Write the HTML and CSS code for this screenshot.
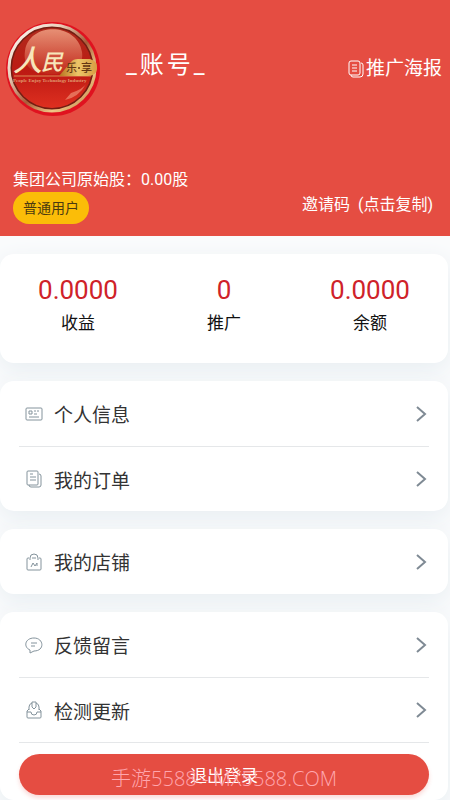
FILE: index.html
```html
<!DOCTYPE html>
<html lang="zh-CN">
<head>
<meta charset="utf-8">
<meta name="viewport" content="width=device-width, initial-scale=1">
<title>个人中心</title>
<link rel="stylesheet" href="styles.css">
</head>
<body>
<header class="hero">
  <div class="profile">
    <svg class="logo" viewBox="0 0 96 98" role="img" aria-label="人民乐享">
      <defs>
        <linearGradient id="rim" x1="0" y1="0" x2="1" y2="1">
          <stop offset="0" stop-color="#fff"/><stop offset=".3" stop-color="#ead0bb"/><stop offset=".55" stop-color="#a85c38"/><stop offset=".75" stop-color="#f0c787"/><stop offset="1" stop-color="#b8763a"/>
        </linearGradient>
        <linearGradient id="ball" x1="0" y1="0" x2="0" y2="1">
          <stop offset="0" stop-color="#b02a1c"/><stop offset=".55" stop-color="#bd1a13"/><stop offset="1" stop-color="#de2f20"/>
        </linearGradient>
        <linearGradient id="shine" x1="0" y1="0" x2="0" y2="1">
          <stop offset="0" stop-color="#f0a184"/><stop offset="1" stop-color="#c22a1b"/>
        </linearGradient>
        <linearGradient id="gold" x1="0" y1="0" x2="1" y2="0">
          <stop offset="0" stop-color="#b8721e"/><stop offset=".5" stop-color="#ecc568"/><stop offset="1" stop-color="#d79b42"/>
        </linearGradient>
      </defs>
      <circle cx="48" cy="49" r="47" fill="#e0121f"/>
      <circle cx="47" cy="48" r="44" fill="#741d12"/>
      <circle cx="47" cy="48" r="43" fill="none" stroke="url(#rim)" stroke-width="3"/>
      <circle cx="47" cy="48" r="40" fill="url(#ball)"/>
      <path d="M20 31C24 2 72 2 77 32C79 45 70 54 47 54C25 54 18 45 20 31Z" fill="url(#shine)" opacity=".85"/>
      <path d="M60 80Q74 77 81 64Q78 69 66 73Z" fill="#f39c80" opacity=".6"/>
      <path d="M9 56H86" stroke="#dc8a55"/>
      <path d="M54 56L66 42Q68 39 73 39H85Q93 41 92 49Q91 56 83 56Z" fill="url(#gold)"/>
      <text class="logo-main" x="8" y="51">人</text>
      <text class="logo-main logo-second" x="36" y="50">民</text>
      <text class="logo-sub" x="61" y="52">乐</text>
      <circle cx="74" cy="48" r="1" fill="#653713"/>
      <text class="logo-sub" x="76" y="52">享</text>
      <text class="logo-en" x="8" y="62">People Enjoy Technology Industry</text>
    </svg>
    <h1 class="account">_账号_</h1>
    <a class="poster" href="#poster">
      <svg class="poster-icon" viewBox="0 0 16 18" aria-hidden="true"><path d="M3 1H10Q12 1 12 3V13Q12 15 10 15H3Q1 15 1 13V3Q1 1 3 1ZM4 5H9M4 8H9M4 11H9M13 3Q15 3 15 5V14Q15 17 12 17H5Q3 17 3 15"/></svg>推广海报</a>
  </div>
  <div class="facts">
    <div>
      <p class="shares">集团公司原始股：0.00股</p>
      <span class="badge">普通用户</span>
    </div>
    <button class="invite" type="button">邀请码&nbsp; (点击复制)</button>
  </div>
</header>
<main class="content">
  <section class="card stats">
    <div><strong class="value">0.0000</strong><span class="label">收益</span></div>
    <div><strong class="value">0</strong><span class="label">推广</span></div>
    <div><strong class="value">0.0000</strong><span class="label">余额</span></div>
  </section>
  <nav class="card menu">
    <a class="row" href="#info"><svg class="icon" viewBox="0 0 18 18" aria-hidden="true"><path d="M2 3H16Q17 3 17 4V14Q17 15 16 15H2Q1 15 1 14V4Q1 3 2 3ZM4 6H7V9H4ZM9 6H11M12 6H14M9 9H12M4 12H14"/></svg><span>个人信息</span><svg class="arrow" viewBox="0 0 12 18" aria-hidden="true"><path d="M2 2L10 9L2 16"/></svg></a>
    <a class="row" href="#orders"><svg class="icon" viewBox="0 0 18 18" aria-hidden="true"><path d="M3 1H12Q13 1 13 2V14Q13 15 12 15H3Q2 15 2 14V2Q2 1 3 1ZM5 4H8M5 7H11M5 10H11M14 4Q16 4 16 6V15Q16 17 14 17H6Q4 17 4 15"/></svg><span>我的订单</span><svg class="arrow" viewBox="0 0 12 18" aria-hidden="true"><path d="M2 2L10 9L2 16"/></svg></a>
  </nav>
  <nav class="card menu">
    <a class="row" href="#shop"><svg class="icon" viewBox="0 0 18 18" aria-hidden="true"><path d="M4 5H3Q2 5 2 6V16Q2 17 3 17H15Q16 17 16 16V6Q16 5 15 5H14M5 7V5Q5 1 9 1Q13 1 13 5V7M7 5H11M6 14L8 10L10 13L12 10V13"/></svg><span>我的店铺</span><svg class="arrow" viewBox="0 0 12 18" aria-hidden="true"><path d="M2 2L10 9L2 16"/></svg></a>
  </nav>
  <section class="card menu last">
    <a class="row" href="#feedback"><svg class="icon" viewBox="0 0 18 18" aria-hidden="true"><path d="M5 14C-2 11 0 2 9 2C19 2 20 15 9 15L5 17ZM6 7H12M6 10H10"/></svg><span>反馈留言</span><svg class="arrow" viewBox="0 0 12 18" aria-hidden="true"><path d="M2 2L10 9L2 16"/></svg></a>
    <a class="row" href="#update"><svg class="icon" viewBox="0 0 18 18" aria-hidden="true"><path d="M7 2Q4 3 4 6V9M11 2Q14 3 14 6V9M7 1H11V6L9 8L7 6ZM4 8L2 10V16Q2 17 3 17H15Q16 17 16 16V10L14 8M2 11H6Q6 14 9 14Q12 14 12 11H16"/></svg><span>检测更新</span><svg class="arrow" viewBox="0 0 12 18" aria-hidden="true"><path d="M2 2L10 9L2 16"/></svg></a>
    <div class="exit">
      <button class="logout" type="button">退出登录</button>
      <span class="watermark">手游5588 - MX5588.COM</span>
    </div>
  </section>
</main>
</body>
</html>
```
FILE: styles.css
```css
* { box-sizing: border-box; }
body {
  margin: 0;
  background: #fafbfc;
  color: #333;
  font-family: Roboto, "Noto Sans CJK SC", sans-serif;
}
a { color: inherit; text-decoration: none; }
button { border: 0; font-family: inherit; cursor: pointer; }
.hero {
  display: flex;
  flex-direction: column;
  gap: 48px;
  padding: 20px 8px 12px 5px;
  background: #e54d42;
  color: #fff;
}
.profile { display: flex; align-items: center; }
.logo { width: 96px; height: 98px; flex: none; }
.logo-main { font: italic 500 29px "Noto Sans CJK SC", sans-serif; fill: #f7e6ba; }
.logo-second { font-size: 22px; }
.logo-sub { font: 500 11px "Noto Sans CJK SC", sans-serif; fill: #653713; }
.logo-en { font: 700 5px "Liberation Serif", serif; fill: #e19a70; }
.account {
  margin: 0 auto 8px 25px;
  font-size: 24px;
  font-weight: 400;
  line-height: 32px;
  letter-spacing: 3px;
}
.poster { display: flex; align-items: center; gap: 2px; font-size: 19px; line-height: 28px; }
.poster-icon { width: 16px; height: 18px; fill: none; stroke: #fff; }
.facts {
  display: flex;
  justify-content: space-between;
  align-items: center;
  padding: 0 9px 0 8px;
}
.shares { margin: 0; padding-top: 2px; font-size: 16px; line-height: 24px; }
.badge {
  display: inline-block;
  padding: 0 10px;
  border-radius: 16px;
  background: #fbbd08;
  color: #4b3a10;
  font-size: 14px;
  line-height: 32px;
}
.invite { margin-top: 20px; padding: 0; background: none; color: #fff; font-size: 16px; line-height: 24px; }
.content {
  display: grid;
  gap: 18px;
  padding: 18px 2px 0 0;
}
.card { border-radius: 14px; background: #fff; box-shadow: 0 8px 24px #e8eef2; }
.stats {
  display: grid;
  grid-template-columns: repeat(3, 1fr);
  padding: 20px 5px 22px;
  text-align: center;
}
.value { display: block; color: #cf2229; font-size: 26px; font-weight: 400; line-height: 32px; }
.label { display: block; color: #111; font-size: 17px; line-height: 35px; }
.menu { padding: 0 19px; }
.row {
  display: flex;
  align-items: center;
  height: 65px;
  padding: 0 2px 0 6px;
  font-size: 19px;
}
.row + .row, .exit { border-top: 1px solid #e5e7e9; }
.icon { width: 18px; height: 18px; margin-right: 11px; fill: none; stroke: #84939c; }
.arrow { width: 12px; height: 18px; margin-left: auto; fill: none; stroke: #7f8a94; stroke-width: 2; }
.exit { position: relative; padding: 11px 0 5px; }
.logout {
  display: block;
  width: 100%;
  height: 41px;
  border-radius: 21px;
  background: #e54d42;
  box-shadow: 0 3px 4px #e54d4233;
  color: #fff;
  font-size: 17px;
}
.watermark {
  position: absolute;
  inset: 20px 0 auto;
  color: #ffa6ae;
  font: 300 20px/32px "Open Sans", "Noto Sans CJK SC", sans-serif;
  text-align: center;
  pointer-events: none;
}
```
